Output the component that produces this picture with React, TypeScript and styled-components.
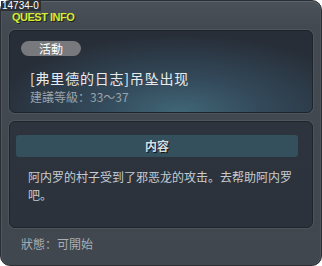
import React from "react";
import styled, { createGlobalStyle } from "styled-components";

const GlobalStyle = createGlobalStyle`
  html, body { margin: 0; padding: 0; background: #ffffff; }
  * { box-sizing: border-box; }
`;

const CJK = `"Noto Sans CJK SC", "Noto Sans CJK TC", "Noto Sans", sans-serif`;

const Window = styled.div`
  position: relative;
  width: 322px;
  height: 266px;
  padding: 0 8px;
  display: flex;
  flex-direction: column;
  border: 1px solid #2a2f35;
  border-radius: 10px;
  background: linear-gradient(180deg, #4a5159 0px, #424950 26px, #40474e 100%);
  box-shadow: inset 0 1px 0 #5d656d, inset 1px 0 0 #4d555d, inset -1px 0 0 #4d555d;
  font-family: ${CJK};
`;

const IdLabel = styled.div`
  position: absolute;
  top: 0;
  left: 0;
  padding: 0 2px 0 1px;
  height: 10px;
  line-height: 10px;
  background: #2c3136;
  color: #ffffff;
  font-family: "Liberation Sans", Arial, sans-serif;
  font-size: 10px;
`;

const WindowTitle = styled.div`
  margin-top: 10px;
  padding-left: 3px;
  height: 12px;
  line-height: 12px;
  font-family: "Liberation Sans", Arial, sans-serif;
  font-weight: bold;
  font-size: 11px;
  letter-spacing: -0.5px;
  color: #d6ec36;
  text-shadow: 1px 1px 0 #1b1f14;
`;

const Card = styled.div<{ $height: number; $glow?: boolean }>`
  height: ${(p) => p.$height}px;
  margin-top: 7px;
  border: 1px solid #1f242a;
  border-radius: 6px;
  box-shadow: 0 0 0 1px rgba(255, 255, 255, 0.07);
  background: ${(p) =>
    p.$glow
      ? "radial-gradient(ellipse 62% 95% at 56% 100%, #406676 0%, #33495a 45%, #272e38 100%)"
      : "linear-gradient(180deg, #2e343d 0%, #2c323b 100%)"};
`;

const InfoCard = styled(Card)`
  padding: 10px 0 0 11px;
`;

const ContentCard = styled(Card)`
  margin-top: 8px;
  padding: 13px 14px 0 6px;
`;

const Pill = styled.div`
  width: 60px;
  height: 15px;
  border-radius: 8px;
  background: #77797c;
  color: #ffffff;
  font-size: 12px;
  line-height: 15px;
  text-align: center;
`;

const TextBlock = styled.div`
  padding-left: 9px;
  margin-top: 15px;
`;

const QuestName = styled.div`
  font-size: 14px;
  line-height: 14px;
  letter-spacing: 0.8px;
  color: #e8eaec;
`;

const Level = styled.div`
  margin-top: 5px;
  font-size: 12px;
  line-height: 13px;
  color: #9ba4ac;
`;

const SectionBar = styled.div`
  height: 22px;
  border-radius: 3px;
  background: #34505d;
  color: #d4dfe3;
  font-size: 12px;
  font-weight: bold;
  line-height: 22px;
  text-align: center;
  text-shadow: 1px 1px 0 #0f1418;
`;

const Description = styled.div`
  margin-top: 11px;
  padding-left: 12px;
  font-size: 12px;
  line-height: 18px;
  color: #c6ccd1;
`;

const Status = styled.div`
  margin-top: 8px;
  padding-left: 12px;
  font-size: 12px;
  line-height: 16px;
  color: #a8afb5;
`;

export default function App() {
  return (
    <>
      <GlobalStyle />
      <Window>
        <IdLabel>14734-0</IdLabel>
        <WindowTitle>QUEST INFO</WindowTitle>
        <InfoCard $height={83} $glow>
          <Pill>活動</Pill>
          <TextBlock>
            <QuestName>[弗里德的日志]吊坠出现</QuestName>
            <Level>建議等級：33～37</Level>
          </TextBlock>
        </InfoCard>
        <ContentCard $height={107}>
          <SectionBar>内容</SectionBar>
          <Description>阿内罗的村子受到了邪恶龙的攻击。去帮助阿内罗吧。</Description>
        </ContentCard>
        <Status>狀態：可開始</Status>
      </Window>
    </>
  );
}
